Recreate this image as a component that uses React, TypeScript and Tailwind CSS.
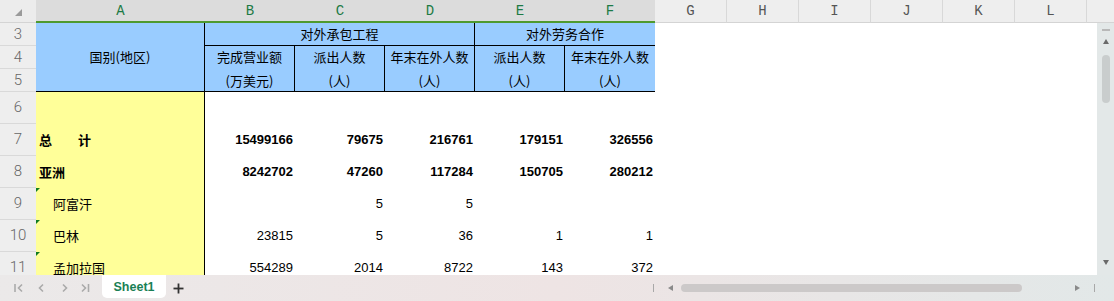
import React from "react";

const CJK = "font-['Noto_Sans_CJK_SC','Noto_Sans',sans-serif]";
const NUM = "font-['Liberation_Sans','Noto_Sans_CJK_SC',sans-serif]";

type Row = { name: string; kind: "total" | "region" | "country"; vals: string[] };

const rows: Row[] = [
  { name: "总　　计", kind: "total", vals: ["15499166", "79675", "216761", "179151", "326556"] },
  { name: "亚洲", kind: "region", vals: ["8242702", "47260", "117284", "150705", "280212"] },
  { name: "阿富汗", kind: "country", vals: ["", "5", "5", "", ""] },
  { name: "巴林", kind: "country", vals: ["23815", "5", "36", "1", "1"] },
  { name: "孟加拉国", kind: "country", vals: ["554289", "2014", "8722", "143", "372"] },
];

const rowHeaders: { n: string; h: string }[] = [
  { n: "3", h: "h-[23px]" },
  { n: "4", h: "h-[23px]" },
  { n: "5", h: "h-[23px]" },
  { n: "6", h: "h-[32px]" },
  { n: "7", h: "h-[32px]" },
  { n: "8", h: "h-[32px]" },
  { n: "9", h: "h-[32px]" },
  { n: "10", h: "h-[32px]" },
  { n: "11", h: "h-[32px]" },
];

function ColHeader() {
  const sel = ["B", "C", "D", "E", "F"];
  const rest = ["G", "H", "I", "J", "K", "L"];
  return (
    <div className="flex h-[23px] shrink-0 font-['Liberation_Mono',monospace] text-[14px]">
      <div className="w-[36px] bg-[#ececec] border-b border-[#d4d4d4] flex pl-[15px] pt-[9px]">
        <svg width="7" height="7" viewBox="0 0 7 7">
          <polygon points="7,0 7,7 0,7" fill="#9a9a9a" />
        </svg>
      </div>
      <div className="w-[169px] bg-[#dcdcdc] border-b-2 border-[#4f9a2f] flex items-center justify-center text-[#1d7a45] pt-[1px]">
        A
      </div>
      {sel.map((c) => (
        <div
          key={c}
          className="w-[90px] bg-[#dcdcdc] border-b-2 border-[#4f9a2f] flex items-center justify-center text-[#1d7a45] pt-[1px]"
        >
          {c}
        </div>
      ))}
      {rest.map((c) => (
        <div
          key={c}
          className="w-[72px] bg-[#eeeeee] border-b border-r border-b-[#d4d4d4] border-r-[#d8d8d8] flex items-center justify-center text-[#555555] pt-[1px]"
        >
          {c}
        </div>
      ))}
      <div className="flex-1 bg-[#eeeeee] border-b border-[#d4d4d4]" />
    </div>
  );
}

function TableHeader() {
  return (
    <div
      className={`grid grid-cols-[169px_90px_90px_90px_90px_90px] grid-rows-[23px_46px] bg-[#99ccff] text-[13px] text-black ${CJK} w-[619px]`}
    >
      <div className="row-span-2 border-r border-b border-black flex items-center justify-center">
        国别(地区)
      </div>
      <div className="col-span-3 border-r border-b border-black flex items-center justify-center">
        对外承包工程
      </div>
      <div className="col-span-2 border-b border-black flex items-center justify-center">
        对外劳务合作
      </div>
      {[
        ["完成营业额", "(万美元)"],
        ["派出人数", "(人)"],
        ["年末在外人数", "(人)"],
        ["派出人数", "(人)"],
        ["年末在外人数", "(人)"],
      ].map(([a, b], i) => (
        <div
          key={i}
          className={`border-b border-black flex flex-col items-center justify-center leading-[24px] ${
            i < 4 ? "border-r" : ""
          }`}
        >
          <span>{a}</span>
          <span>{b}</span>
        </div>
      ))}
    </div>
  );
}

function DataRow({ row }: { row?: Row }) {
  const bold = row && row.kind !== "country";
  return (
    <div className="flex h-[32px] shrink-0">
      <div
        className={`relative w-[169px] bg-[#ffff99] border-r border-black flex items-center text-[13px] text-black ${CJK} ${
          row?.kind === "country" ? "pl-[17px]" : "pl-[3px]"
        } ${bold ? "font-bold" : ""}`}
      >
        {row?.kind === "country" && (
          <svg className="absolute left-0 top-0" width="4" height="4" viewBox="0 0 4 4">
            <polygon points="0,0 4,0 0,4" fill="#0f7a20" />
          </svg>
        )}
        {row?.name}
      </div>
      {[0, 1, 2, 3, 4].map((i) => (
        <div
          key={i}
          className={`w-[90px] flex items-center justify-end pr-[2px] text-[13px] text-black ${NUM} ${
            bold ? "font-bold" : ""
          }`}
        >
          {row?.vals[i]}
        </div>
      ))}
    </div>
  );
}

function VScroll() {
  return (
    <div className="w-[17px] bg-[#e3e8e8] flex flex-col items-center">
      <div className="mt-[6px] h-[2px] w-[8px] bg-[#b8b8b8]" />
      <svg className="mt-[8px]" width="6" height="5" viewBox="0 0 6 5">
        <polygon points="3,0 6,5 0,5" fill="#6a6a6a" />
      </svg>
      <div className="mt-[11px] h-[48px] w-[8px] rounded-full bg-[#c9cdcd]" />
      <div className="flex-1" />
      <svg className="mb-[10px]" width="6" height="5" viewBox="0 0 6 5">
        <polygon points="0,0 6,0 3,5" fill="#6a6a6a" />
      </svg>
    </div>
  );
}

function BottomBar() {
  const c = "#aaaaaa";
  return (
    <div className="flex h-[26px] shrink-0 items-center bg-gradient-to-r from-[#ebe9e9] via-[#eee4e4] to-[#e2e8e8] pl-[14px]">
      <svg width="10" height="10" viewBox="0 0 10 10">
        <line x1="1" y1="1" x2="1" y2="9" stroke={c} strokeWidth="1.6" />
        <polyline points="8,1.5 4.5,5 8,8.5" fill="none" stroke={c} strokeWidth="1.6" />
      </svg>
      <svg className="ml-[13px]" width="10" height="10" viewBox="0 0 10 10">
        <polyline points="6,1.5 2.5,5 6,8.5" fill="none" stroke={c} strokeWidth="1.6" />
      </svg>
      <svg className="ml-[13px]" width="10" height="10" viewBox="0 0 10 10">
        <polyline points="3,1.5 6.5,5 3,8.5" fill="none" stroke={c} strokeWidth="1.6" />
      </svg>
      <svg className="ml-[10px]" width="10" height="10" viewBox="0 0 10 10">
        <polyline points="2,1.5 5.5,5 2,8.5" fill="none" stroke={c} strokeWidth="1.6" />
        <line x1="8.5" y1="1" x2="8.5" y2="9" stroke={c} strokeWidth="1.6" />
      </svg>
      <div className="ml-[12px] self-start h-[23px] w-[64px] rounded-b-[5px] bg-white flex items-center justify-center pt-[1px] text-[12.5px] font-bold text-[#1a7f55] font-['Liberation_Sans',sans-serif]">
        Sheet1
      </div>
      <svg className="ml-[7px]" width="11" height="11" viewBox="0 0 11 11">
        <line x1="5.5" y1="0.5" x2="5.5" y2="10.5" stroke="#333333" strokeWidth="1.8" />
        <line x1="0.5" y1="5.5" x2="10.5" y2="5.5" stroke="#333333" strokeWidth="1.8" />
      </svg>
      <div className="flex-1" />
      <div className="flex items-center pr-[19px]">
        <div className="w-[1px] h-[8px] bg-[#a8a8a8]" />
        <svg className="ml-[14px]" width="5" height="6" viewBox="0 0 5 6">
          <polygon points="0,3 5,0 5,6" fill="#8a8a8a" />
        </svg>
        <div className="ml-[8px] h-[8px] w-[341px] rounded-full bg-[#ccc9c9]" />
        <svg className="ml-[53px]" width="5" height="6" viewBox="0 0 5 6">
          <polygon points="0,0 5,3 0,6" fill="#8a8a8a" />
        </svg>
        <div className="ml-[14px] w-[1px] h-[8px] bg-[#a8a8a8]" />
      </div>
    </div>
  );
}

export default function App() {
  return (
    <div className="w-[1114px] h-[301px] flex flex-col bg-white overflow-hidden">
      <ColHeader />
      <div className="flex h-[252px] shrink-0">
        <div className="flex flex-1 overflow-hidden bg-white">
          <div className="w-[36px] shrink-0 flex flex-col bg-[#eeeeee] font-['Roboto','Liberation_Sans',sans-serif] font-light text-[15px] text-[#666666]">
            {rowHeaders.map((r) => (
              <div
                key={r.n}
                className={`${r.h} shrink-0 border-b border-[#d9d9d9] flex items-center justify-center`}
              >
                {r.n}
              </div>
            ))}
          </div>
          <div className="flex flex-col flex-1">
            <TableHeader />
            <DataRow />
            {rows.map((r) => (
              <DataRow key={r.name} row={r} />
            ))}
            <DataRow />
          </div>
        </div>
        <VScroll />
      </div>
      <BottomBar />
    </div>
  );
}
